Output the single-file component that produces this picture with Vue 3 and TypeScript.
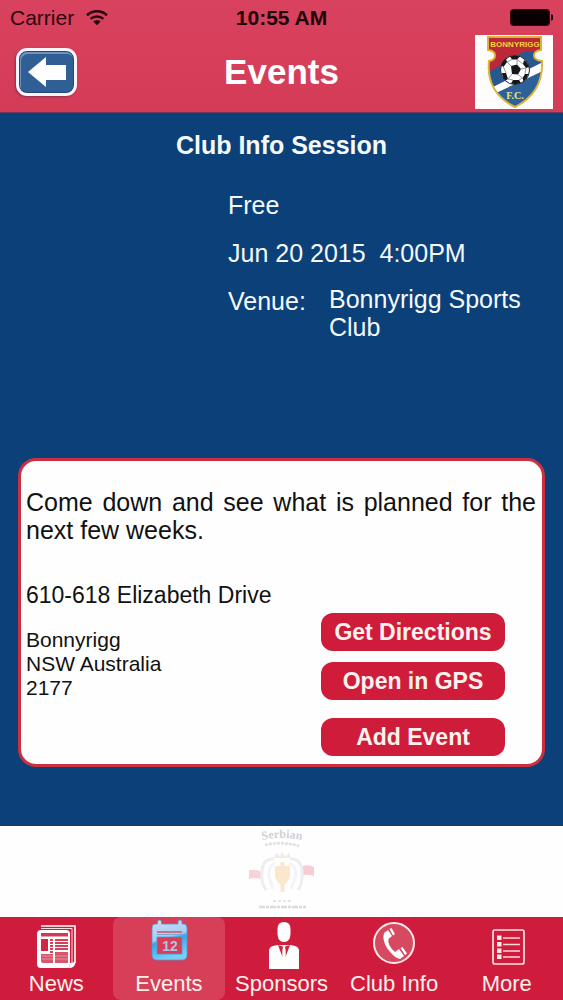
<script setup lang="ts">
import { ref } from 'vue'

interface Tab {
  id: string
  label: string
}

const tabs: Tab[] = [
  { id: 'news', label: 'News' },
  { id: 'events', label: 'Events' },
  { id: 'sponsors', label: 'Sponsors' },
  { id: 'club', label: 'Club Info' },
  { id: 'more', label: 'More' },
]
const active = ref('events')

const event = {
  title: 'Club Info Session',
  price: 'Free',
  when: 'Jun 20 2015\u00a0 4:00PM',
  venue: 'Bonnyrigg Sports Club',
  description: 'Come down and see what is planned for the next few weeks.',
  street: '610-618 Elizabeth Drive',
  locality: ['Bonnyrigg', 'NSW Australia', '2177'],
}
</script>

<template>
  <div class="screen">
    <header class="top">
      <div class="status">
        <span class="carrier">
          Carrier
          <svg class="wifi" width="22" height="17" viewBox="0 0 22 17" aria-hidden="true">
            <path d="M1 6.2A14.5 14.5 0 0 1 21 6.2" fill="none" stroke="#2b0710" stroke-width="2.6" />
            <path d="M4.6 9.9A9.5 9.5 0 0 1 17.4 9.9" fill="none" stroke="#2b0710" stroke-width="2.5" />
            <path d="M11 16.3L7.3 12.6A5.3 5.3 0 0 1 14.7 12.6Z" fill="#2b0710" />
          </svg>
        </span>
        <strong class="clock">10:55 AM</strong>
        <svg class="battery" width="44" height="18" viewBox="0 0 44 18" role="img" aria-label="Battery full">
          <rect x="1.5" y="0.5" width="39" height="16" rx="2.5" fill="none" stroke="#3a0a14" />
          <rect x="2" y="1" width="38" height="15" rx="2" fill="#0a0003" />
          <path d="M42 5.5h.6a1.4 1.4 0 0 1 1.400 1.500v3a1.400 1.400 0 0 1-1.400 1.500H42z" fill="#14020a" />
        </svg>
      </div>
      <div class="bar">
        <button type="button" class="back" aria-label="Back">
          <svg width="38" height="30" viewBox="0 0 38 30" aria-hidden="true">
            <path d="M0 15L18 0V8H38V23H18V30Z" fill="#fff" />
          </svg>
        </button>
        <h1>Events</h1>
        <svg class="crest" width="78" height="74" viewBox="0 0 78 74" role="img" aria-label="Bonnyrigg F.C.">
          <defs>
            <clipPath id="shield">
              <path d="M13 2H66V15Q59 16 59 20.500Q59 25 67 26C68 46 60 62 40 72C20 62 12 46 14 26Q20 25 20 20.500Q20 16 13 15Z" />
            </clipPath>
          </defs>
          <rect width="78" height="74" fill="#fffdfc" />
          <g clip-path="url(#shield)">
            <rect width="78" height="74" fill="#bd2836" />
            <path d="M10 39L34 25L50 16H78V74H10Z" fill="#285891" />
            <path d="M10 56L68 27V36L22 60Z" fill="#fff" />
            <path d="M21 58L70 35V74H28Z" fill="#2c6299" />
          </g>
          <path d="M13 2H66V15Q59 16 59 20.500Q59 25 67 26C68 46 60 62 40 72C20 62 12 46 14 26Q20 25 20 20.500Q20 16 13 15Z" fill="none" stroke="#d8b43c" stroke-width="2" />
          <text x="40" y="12" text-anchor="middle" class="crest-name">BONNYRIGG</text>
          <circle cx="40" cy="35" r="14.500" fill="#fff" stroke="#172539" stroke-width="1" />
          <g fill="#15171b">
            <path d="M36 31L42 29.500L46 34L43 39.500L37 39Z" />
            <path d="M35 21.500Q40 20 45 21.500L42 24.500L37 24.500Z" />
            <path d="M26 30Q28 25 31 23.500L32 27L28.500 32Z" />
            <path d="M49 25Q52.500 27 54 32L51 33L48 29Z" />
            <path d="M27 38L31 38L33 44L30.500 45.500Q27 42 27 38Z" />
            <path d="M38 45L44 45L46 48Q41 50 36 48.500Z" />
            <path d="M50 39L53.500 39Q52 44 48.500 46.500L47.500 43Z" />
          </g>
          <path d="M42 29.500V24.500M36 31L32 27M46 34L51 33M43 39.500L47.500 43M37 39L33 44M32 27L37 24.500M42 24.500L48 29M33 44L38 45M44 45L47.500 43M51 33L50 39M28.500 32L31 38" stroke="#7b838c" stroke-width=".8" />
          <text x="40" y="64" text-anchor="middle" class="crest-fc">F.C.</text>
        </svg>
      </div>
    </header>

    <main class="content">
      <h2>{{ event.title }}</h2>
      <div class="facts">
        <p>{{ event.price }}</p>
        <p>{{ event.when }}</p>
        <dl>
          <dt>Venue:</dt>
          <dd>{{ event.venue }}</dd>
        </dl>
      </div>

      <section class="card">
        <p class="description">{{ event.description }}</p>
        <p class="street">{{ event.street }}</p>
        <div class="place">
          <address>
            <span v-for="line in event.locality" :key="line">{{ line }}</span>
          </address>
          <div class="actions">
            <div class="routes">
              <button type="button">Get Directions</button>
              <button type="button">Open in GPS</button>
            </div>
            <button type="button">Add Event</button>
          </div>
        </div>
      </section>
    </main>

    <aside class="sponsor" aria-label="Sponsor">
      <svg width="72" height="86" viewBox="0 0 72 86" role="img" aria-label="Serbian">
        <path id="arch" d="M12 15Q36 9 60 15" fill="none" />
        <text class="sponsor-name"><textPath href="#arch" startOffset="50%" text-anchor="middle">Serbian</textPath></text>
        <path d="M19 19Q36 15 53 20" fill="none" stroke="#e0e0e2" stroke-width="2.500" stroke-dasharray="3 1" />
        <path d="M3 44Q10 43 16 46L15 53Q9 51 3 53Z" fill="#f7d3d9" />
        <path d="M57 40Q62 38 68 41V50Q62 48 57 49Z" fill="#f7ccd4" />
        <g fill="none" stroke="#eceef1" stroke-width="3">
          <path d="M28 33Q16 32 16 47Q15 57 20 64M44 33Q56 32 56 47Q57 57 52 64" />
          <path d="M29 37Q23 39 23 50L27 63M43 37Q50 39 50 50L45 63" stroke="#f3f4f6" />
        </g>
        <path d="M28 32L30 27L34 31L36 25L39 31L43 27L45 32Z" fill="#f0ecdf" />
        <path d="M29 40H44V50Q43 56 36.500 60Q30 56 29 50Z" fill="#fbe8c8" />
        <path d="M36.500 36V66" stroke="#f8e6d2" stroke-width="4" />
        <path d="M27 75H46" stroke="#e4e4e7" stroke-width="2" stroke-dasharray="3 2" />
        <path d="M13 81H60" stroke="#dadbdf" stroke-width="2.500" stroke-dasharray="6 1 3 1" />
      </svg>
    </aside>

    <nav class="tabs" aria-label="Main">
      <a
        v-for="tab in tabs"
        :key="tab.id"
        :href="'#' + tab.id"
        :class="{ active: tab.id === active }"
        :aria-current="tab.id === active ? 'page' : undefined"
        @click="active = tab.id"
      >
        <svg v-if="tab.id === 'news'" width="48" height="50" viewBox="0 0 48 50" aria-hidden="true">
          <path d="M9 8H43V45" fill="none" stroke="#fff" stroke-width="1.600" />
          <path d="M9 10.500H40V47" fill="none" stroke="#fbdfe3" stroke-width="1" />
          <rect x="5" y="12" width="33" height="38" rx="4" fill="#fff" />
          <path d="M38 45Q39 50 33 50H37Q43 50 43.500 44Z" fill="#fff" />
          <rect x="9" y="15" width="27" height="3.500" fill="#cf3a52" />
          <rect x="9" y="21" width="7" height="12" fill="#cf2844" />
          <path d="M18 22H21M18 25H21M18 28H21M18 31H21M18 34H21M23 22H36M23 25H36M23 28H36M23 31H36" stroke="#d6405a" stroke-width="1.800" />
          <path d="M9 36H21V45H11Q9 45 9 43ZM23 34H36V45H23Z" fill="#d8566b" />
          <path d="M10 38H21M10 41H21M23 38H36M23 41H36" stroke="#eba4af" stroke-width=".7" />
        </svg>
        <svg v-else-if="tab.id === 'events'" width="48" height="50" viewBox="0 0 48 50" aria-hidden="true">
          <defs>
            <linearGradient id="calendar" x1="0" y1="0" x2=".25" y2="1">
              <stop offset="0" stop-color="#cfdcf5" />
              <stop offset=".5" stop-color="#a5cdf0" />
              <stop offset=".58" stop-color="#39a4e7" />
              <stop offset="1" stop-color="#76cff7" />
            </linearGradient>
          </defs>
          <path fill-rule="evenodd" d="M10 6H12.500V4Q12.500 2 14.500 2T16.500 4V6H33V4Q33 2 35 2T37 4V6H39Q42 6 42 10V37Q42 42 37 42H12Q7 42 7 37V10Q7 6 10 6ZM12 19V36H37V19Z" fill="url(#calendar)" stroke="#4f97cc" stroke-width=".8" />
          <path d="M12 14H37" stroke="#cf5a76" stroke-width="1.600" />
          <path d="M12 16.500H37" stroke="#7ba9d6" stroke-width="1" />
          <text x="25" y="33" text-anchor="middle" class="day">12</text>
        </svg>
        <svg v-else-if="tab.id === 'sponsors'" width="48" height="50" viewBox="0 0 48 50" aria-hidden="true">
          <path d="M27 4Q33.500 4 33.500 11V16Q33 24 27 24Q21 24 20.500 16V11Q20.500 4 27 4Z" fill="#fff" />
          <path d="M12 51V33Q12 29 16 28L20 27H34L38 28Q42 29 42 33V51Z" fill="#fff" />
          <path d="M21 27L25.500 39L25.500 31L27 29L28.500 31L28.500 39L33 27L29.500 28L28.500 27H25.500L24.500 28Z" fill="#c92743" />
          <path d="M25 27H29L28 30L28.500 37L27 39.500L25.500 37L26 30Z" fill="#fff" />
        </svg>
        <svg v-else-if="tab.id === 'club'" width="48" height="50" viewBox="0 0 48 50" aria-hidden="true">
          <circle cx="24" cy="25" r="20" fill="#d54a61" stroke="#ffe9e8" stroke-width="2" />
          <path d="M14 15L18 12L22 18L18.500 21Q17 27 25 34L29 31L34 38L30 41Q24 40 17 30Q12 22 14 15Z" fill="#fff" />
          <path d="M19.500 11L21.500 10L25 16L23 17.500ZM30.500 30L32.500 29L37 35.500L35 37Z" fill="#fff" />
        </svg>
        <svg v-else width="48" height="50" viewBox="0 0 48 50" aria-hidden="true">
          <rect x="10" y="12" width="31" height="34" rx="2" fill="none" stroke="#ffe4e4" stroke-width="1.700" />
          <path d="M14 17.500h4.500v4.500h-4.500zM14 24h4.500v4.500h-4.500zM14 30.500h4.500v4.500h-4.500zM14 36.500h4.500v4.500h-4.500z" fill="#ffe9e9" />
          <path d="M20 20H37M20 26.500H37M20 33H37M20 39H37" stroke="#ffd8da" stroke-width="1.500" />
        </svg>
        <span>{{ tab.label }}</span>
      </a>
    </nav>
  </div>
</template>

<style>
body {
  margin: 0;
}
</style>

<style scoped>
.screen {
  display: flex;
  flex-direction: column;
  min-height: 100vh;
  background: #0c4079;
  font-family: 'Liberation Sans', Arial, sans-serif;
  font-size: 25px;
  line-height: 28px;
  color: #f4f9fc;
}
h1, h2, p, dl, dd {
  margin: 0;
}
button {
  font: inherit;
  cursor: pointer;
}
.top {
  background: linear-gradient(#d9425e, #d43b56);
  border-bottom: 1px solid #6d3963;
}
.status {
  display: grid;
  grid-template-columns: 1fr auto 1fr;
  align-items: center;
  height: 35px;
  padding: 0 10px;
  font-size: 21px;
  color: #2b0710;
}
.carrier {
  display: flex;
  align-items: center;
  gap: 12px;
}
.clock {
  color: #1c040a;
}
.battery {
  justify-self: end;
}
.bar {
  display: grid;
  grid-template-columns: 1fr auto 1fr;
  align-items: center;
  padding: 0 10px 3px;
}
.bar h1 {
  font-size: 35px;
  line-height: 40px;
  color: #fff;
}
.back {
  display: grid;
  place-items: center;
  box-sizing: border-box;
  width: 61px;
  height: 48px;
  margin-left: 6px;
  padding: 0;
  border: 3px solid #fbf4fb;
  border-radius: 11px;
  background: #2f5f95;
  box-shadow: inset 0 0 0 1px #20477a, inset 1px 2px 0 1px #6f93bd, -1px 1px 2px #8d3050;
}
.crest {
  justify-self: end;
}
.crest-name {
  font: bold 8px 'Liberation Sans', Arial, sans-serif;
  fill: #f3d33f;
}
.crest-fc {
  font: bold 10px 'Liberation Serif', serif;
  fill: #f5e37a;
}
.content {
  flex: 1;
  padding: 18px 18px 57px;
}
.content h2 {
  font-size: 25px;
  line-height: 28px;
  text-align: center;
}
.facts {
  display: grid;
  gap: 20px;
  margin: 32px 0 117px;
  padding-left: 210px;
}
.facts dl {
  display: grid;
  grid-template-columns: 101px 1fr;
  align-items: start;
  margin-top: -2px;
}
.facts dt {
  line-height: 32px;
}
.card {
  padding: 27px 6px 8px 5px;
  border: 3px solid #cc3040;
  border-radius: 18px;
  background: #fefefe;
  color: #111;
}
.description {
  text-align: justify;
}
.street {
  margin-top: 37px;
  font-size: 23px;
}
.place {
  display: flex;
  justify-content: space-between;
  padding: 4px 31px 0 0;
}
address {
  display: flex;
  flex-direction: column;
  padding-top: 15px;
  font-size: 21px;
  font-style: normal;
  line-height: 24px;
}
.actions,
.routes {
  display: grid;
  gap: 11px;
}
.actions {
  gap: 18px;
}
.actions button {
  width: 184px;
  height: 38px;
  padding: 0;
  border: 0;
  border-radius: 12px;
  background: #cf1c3b;
  color: #fff2ee;
  font-size: 23px;
  font-weight: bold;
  line-height: 36px;
}
.sponsor {
  display: flex;
  justify-content: center;
  padding: 0 0 5px;
  background: #fefefe;
}
.sponsor-name {
  font: bold 12px 'Liberation Serif', serif;
  fill: #d0d1d5;
}
.tabs {
  display: grid;
  grid-template-columns: repeat(5, 1fr);
  background: #d01c3c;
}
.tabs a {
  display: flex;
  flex-direction: column;
  align-items: center;
  gap: 3px;
  height: 83px;
  border-radius: 8px;
  color: #fff0ec;
  font-size: 22px;
  line-height: 26px;
  text-decoration: none;
}
.tabs svg {
  margin-top: 1px;
  overflow: visible;
}
.tabs .active {
  background: #d73e57;
}
.day {
  font: bold 14px 'Liberation Sans', Arial, sans-serif;
  fill: #a5c6e2;
}
</style>
